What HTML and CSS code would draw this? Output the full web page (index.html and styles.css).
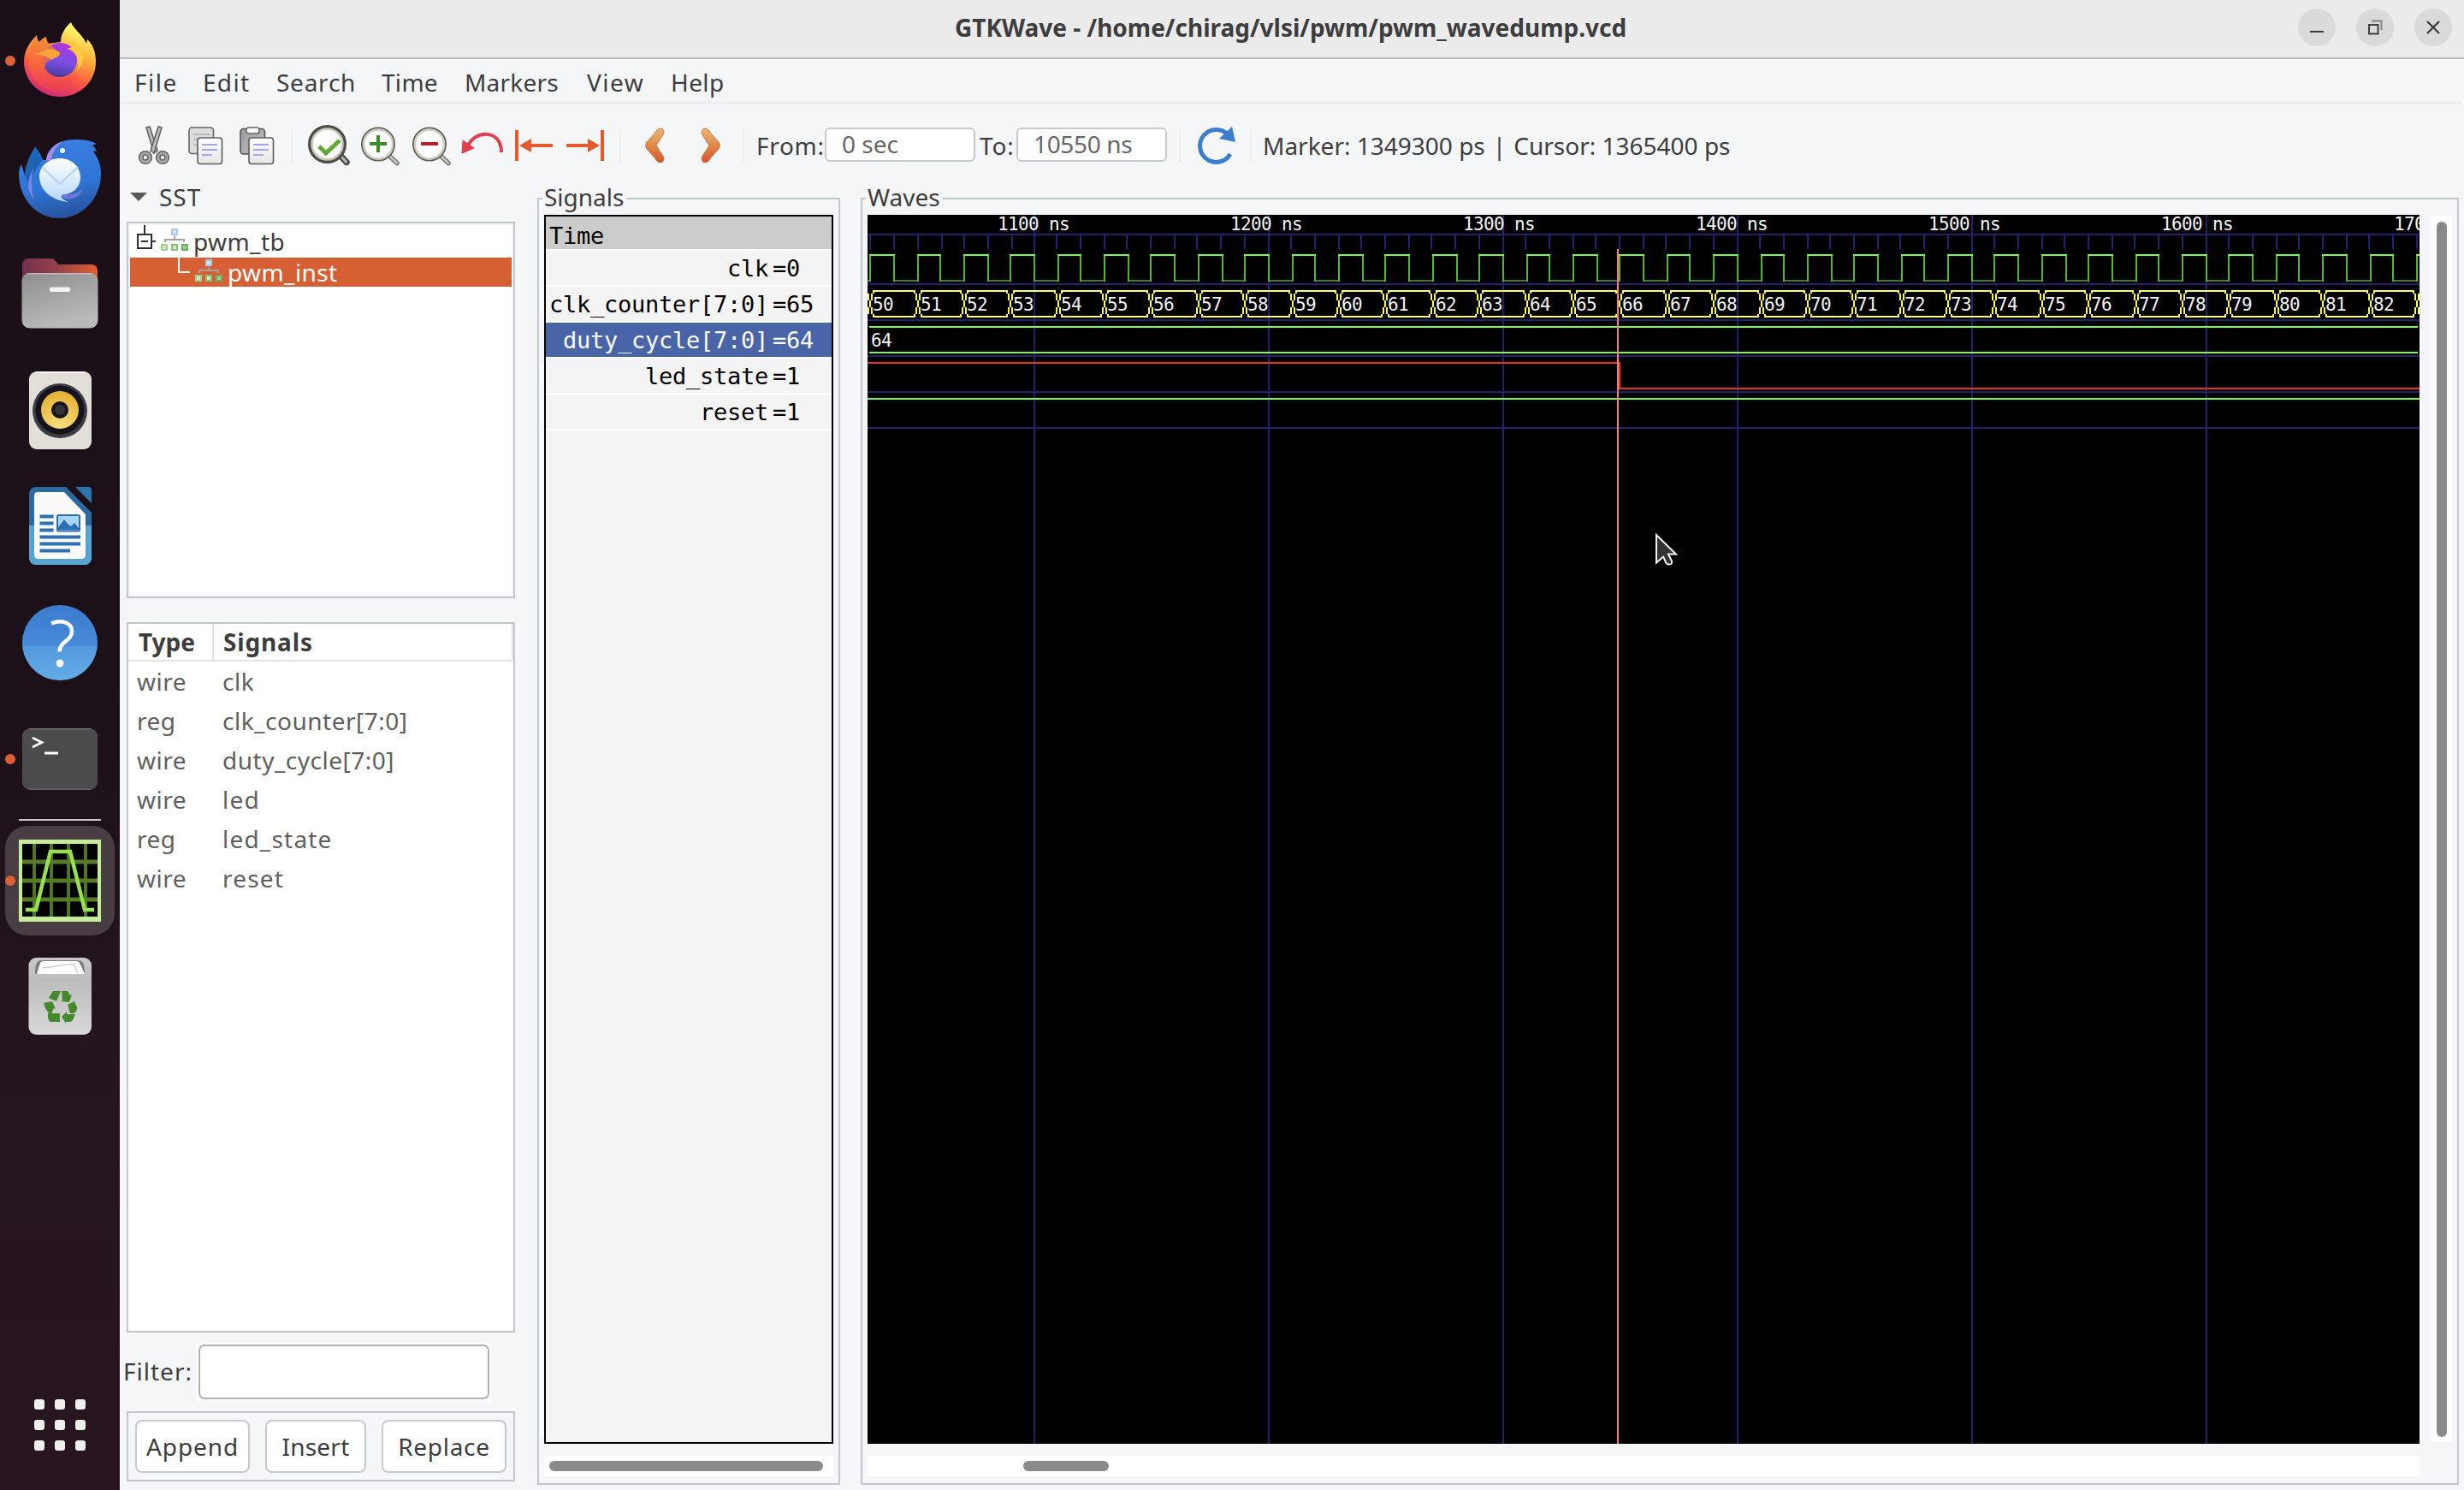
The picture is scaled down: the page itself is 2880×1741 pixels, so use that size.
FILE: index.html
```html
<!DOCTYPE html>
<html lang="en">
<head>
<meta charset="utf-8">
<title>GTKWave - /home/chirag/vlsi/pwm/pwm_wavedump.vcd</title>
<link rel="stylesheet" href="styles.css">
</head>
<body>
<nav class="dock">
  <div class="dock-item">
    <i class="running"></i>
    <svg viewBox="0 0 96 96" width="96" height="96">
      <defs>
        <linearGradient id="ffBody" x1="0.75" y1="0" x2="0.35" y2="1"><stop offset="0.1" stop-color="#fff36b"/><stop offset="0.38" stop-color="#fdb43a"/><stop offset="0.68" stop-color="#fb5a42"/><stop offset="1" stop-color="#d3277a"/></linearGradient>
        <linearGradient id="ffBall" x1="0.6" y1="0" x2="0.4" y2="1"><stop offset="0" stop-color="#b035dd"/><stop offset="0.55" stop-color="#7a4fe6"/><stop offset="1" stop-color="#4b3a95"/></linearGradient>
        <linearGradient id="ffFox" x1="0" y1="0" x2="0" y2="1"><stop offset="0" stop-color="#ef8236"/><stop offset="0.5" stop-color="#f86a3d"/><stop offset="1" stop-color="#ee3b52"/></linearGradient>
      </defs>
      <path d="M61 3c3 8 13 14 18 25l1-5c7 6 10 16 10 26 0 24-19 41-42 41S6 72 6 49c0-12 6-22 15-31 0 4 1 6 3 8 3-3 5-5 8-6 0 4 1 6 3 8l14-2C49 16 55 8 61 3z" fill="url(#ffBody)"/>
      <circle cx="48" cy="47" r="20" fill="url(#ffBall)"/>
      <path d="M21 18c0 4 1 6 3 8 3-3 5-5 8-6 0 6 4 9 9 13 3 3 7 4 7 6 0 4-5 5-9 7-12 4-11 19-1 25 10 5 24 3 29-9-1 16-15 25-31 21C20 79 9 60 12 40c1-9 5-16 9-22z" fill="url(#ffFox)" opacity="0.8"/>
      <path d="M18 40c6-2 12-2 15-6 5 0 14 2 15 5 0 4-5 5-10 8-5-5-13-6-20-7z" fill="#fba33a"/>
      <path d="M56 34c10 2 16 12 12 26 8-8 9-19 4-27-6-7-12-8-17-8 4 1 7 4 7 7z" fill="#fec840"/>
    </svg>
  </div>
  <div class="dock-item">
    <svg viewBox="0 0 96 96" width="96" height="96">
      <defs>
        <linearGradient id="tbBody" x1="0.4" y1="0" x2="0.6" y2="1"><stop offset="0" stop-color="#3b7fe0"/><stop offset="0.6" stop-color="#2f74d4"/><stop offset="1" stop-color="#265099"/></linearGradient>
        <linearGradient id="tbMail" x1="0" y1="0" x2="0" y2="1"><stop offset="0" stop-color="#ffffff"/><stop offset="1" stop-color="#b5d8fb"/></linearGradient>
      </defs>
      <path d="M32 28c1-13 13-24 34-24 9 0 18 1 25 5-2 1-4 1-5 2 3 2 4 4 5 7-2-1-3 0-4 0 6 8 9 16 9 26 0 28-21 52-49 52C20 96 0 72 0 44c0-4 1-8 3-11l4 13c1-12 6-24 12-33 4 4 7 9 9 15z" fill="url(#tbBody)"/>
      <path d="M19 13c-6 9-11 21-12 33l8 18c-3-14 3-24 13-36-2-6-5-11-9-15z" fill="#1f63b5"/>
      <path d="M32 28c1-9 8-18 19-22-8 7-12 13-13 23z" fill="#a78be8"/>
      <path d="M17 38c-8 14-8 26 1 36-4-13-4-24-1-36z" fill="#7d83e8"/>
      <circle cx="51" cy="17" r="3" fill="#e8f3ff"/>
      <path d="M46 66c14 5 22 2 29-5-3 10-14 15-24 11z" fill="#7077d8"/>
      <path d="M24 47c0-12 11-21 24-21s24 9 24 22c0 12-9 20-20 20-4 1-4 5 6 9-14-1-34-10-34-30z" fill="url(#tbMail)"/>
      <path d="M27 36l21 20 21-20" fill="none" stroke="#b5d3f3" stroke-width="2"/>
    </svg>
  </div>
  <div class="dock-item">
    <svg viewBox="0 0 96 96" width="96" height="96">
      <defs>
        <linearGradient id="flBack"><stop offset="0" stop-color="#74304f"/><stop offset="0.45" stop-color="#94404a"/><stop offset="1" stop-color="#e4602f"/></linearGradient>
        <linearGradient id="flFront" x1="0" y1="0" x2="0.4" y2="1"><stop offset="0" stop-color="#8e8e8e"/><stop offset="1" stop-color="#bababa"/></linearGradient>
      </defs>
      <path d="M4 14a7 7 0 0 1 7-7h27q3 0 5 3l3 4h39a7 7 0 0 1 7 7v30H4z" fill="url(#flBack)"/>
      <rect x="3.500" y="24" width="89" height="64.500" rx="9" fill="url(#flFront)"/>
      <path d="M10 24.800h76" stroke="#bdbdbd" stroke-width="1.600"/>
      <rect x="36" y="40.500" width="24" height="5.500" rx="2" fill="#f2f2f2"/>
    </svg>
  </div>
  <div class="dock-item">
    <svg viewBox="0 0 96 96" width="96" height="96">
      <defs><radialGradient id="rbCone" cx="0.5" cy="0.9" r="0.8"><stop offset="0" stop-color="#f8de7e"/><stop offset="1" stop-color="#e5b53a"/></radialGradient></defs>
      <rect x="12" y="3" width="73" height="91" rx="9" fill="#e2dfd8"/>
      <path d="M20 4h57" stroke="#f8f6f2" stroke-width="2"/>
      <circle cx="48" cy="49" r="32" fill="#3c3c42"/>
      <circle cx="48" cy="48" r="28.500" fill="#15131b"/>
      <circle cx="48" cy="48" r="22" fill="url(#rbCone)"/>
      <circle cx="48" cy="48" r="10" fill="#17151a"/>
      <circle cx="48" cy="48" r="6" fill="#343438"/>
    </svg>
  </div>
  <div class="dock-item">
    <svg viewBox="0 0 96 96" width="96" height="96">
      <path d="M20 2h35l30 30v53a8 8 0 0 1-8 8H20a8 8 0 0 1-8-8V10a8 8 0 0 1 8-8z" fill="#2a6a9f"/>
      <path d="M12 47h73v38a8 8 0 0 1-8 8H20a8 8 0 0 1-8-8z" fill="#58a3cf"/>
      <path d="M22 8h31l25 26v47q0 5-5 5H23q-5 0-5-5V12q0-4 4-4z" fill="#fafafa"/>
      <path d="M66 2h15q4 0 4 4v15z" fill="#2c74ae"/>
      <path d="M24.500 36.500h16M24.500 44.500h16M24.500 52.500h16M24.500 60.500h47.500M24.500 68.500h47.500M24.500 76.500h35.500" stroke="#2d6fb3" stroke-width="4"/>
      <rect x="45" y="35" width="26" height="18.500" rx="1.500" fill="#a9d5f3" stroke="#2d6fb3" stroke-width="2"/>
      <path d="M46 52v-3l7-9 5 6 3 2 4-4 5 6v2z" fill="#2d6fb3"/>
    </svg>
  </div>
  <div class="dock-item">
    <svg viewBox="0 0 96 96" width="96" height="96">
      <defs><linearGradient id="hpTop" x1="0" y1="0" x2="0" y2="1"><stop offset="0" stop-color="#3a7bcd"/><stop offset="0.54" stop-color="#478bd8"/><stop offset="0.55" stop-color="#5199dd"/><stop offset="1" stop-color="#64ace6"/></linearGradient></defs>
      <circle cx="48" cy="48" r="44" fill="url(#hpTop)"/>
      <path d="M38 25.500c12-5 24-1 24 9 0 12-14 11-14.500 24" fill="none" stroke="#fff" stroke-width="4.500"/>
      <circle cx="48" cy="72" r="4.500" fill="#fff"/>
    </svg>
  </div>
  <div class="dock-item">
    <i class="running"></i>
    <svg viewBox="0 0 96 96" width="96" height="96">
      <rect x="4" y="12" width="88" height="72" rx="9" fill="#4b4b4b"/>
      <path d="M12 12.800h72" stroke="#757575" stroke-width="1.600"/>
      <path d="M12 83.200h72" stroke="#636363" stroke-width="1.600"/>
      <path d="M16 23l11 5.500-11 5.500" fill="none" stroke="#fff" stroke-width="2.600"/>
      <path d="M30 41h16" stroke="#fff" stroke-width="3"/>
    </svg>
  </div>
  <hr class="dock-line">
  <div class="dock-item active">
    <i class="running"></i>
    <svg viewBox="0 0 96 96" width="96" height="96">
      <rect width="96" height="96" fill="#c5ec98"/>
      <rect x="4" y="5" width="88" height="85" fill="#000"/>
      <path d="M18 5v85M38 5v85M58 5v85M78 5v85" stroke="#507528" stroke-width="4"/>
      <path d="M4 26h88M4 48h88M4 70h88" stroke="#557a2a" stroke-width="5"/>
      <path d="M8 82h12l17-68h23l17 68h11" fill="none" stroke="#97e050" stroke-width="4.500"/>
    </svg>
  </div>
  <div class="dock-item trash">
    <svg viewBox="0 0 96 96" width="96" height="96">
      <defs><linearGradient id="trBody" x1="0" y1="0" x2="0" y2="1"><stop offset="0" stop-color="#c9c9c9"/><stop offset="0.3" stop-color="#bdbdbd"/><stop offset="1" stop-color="#d8d8d8"/></linearGradient></defs>
      <rect x="11.500" y="3" width="73.500" height="90" rx="9" fill="url(#trBody)"/>
      <path d="M19 22c0-12 2-16 8-16h42c6 0 8 4 8 16z" fill="#7c7c7c"/>
      <path d="M21 22l4-13q1-2 4-2h38q3 0 4 2l6 13z" fill="#fff"/>
      <path d="M28 15l36-5 5 11" fill="none" stroke="#d0d0d0" stroke-width="1.500"/>
      <g fill="#45892f">
        <path d="M40 42h9l-5 12-9-4zM50 42h7l3 5 2-1-3 9-10-1 2-1z"/>
        <path d="M29 56l10-2 4 9-2-1-4 9-6-9zM34 68h14v10H38q-3 0-4-5z"/>
        <path d="M57 58l8-4 3 7q1 2-1 5l-3 2h-4zM50 72l6-6v3h10l-3 7q-1 2-4 2h-4v2z"/>
      </g>
    </svg>
  </div>
  <div class="apps"><i></i><i></i><i></i><i></i><i></i><i></i><i></i><i></i><i></i></div>
</nav>

<div class="window">
  <header class="titlebar">
    <h1>GTKWave - /home/chirag/vlsi/pwm/pwm_wavedump.vcd</h1>
    <div class="controls">
      <svg viewBox="0 0 44 44" width="44" height="44"><circle cx="22" cy="22" r="22"/><path d="M14 27h16" stroke-width="2"/></svg>
      <svg viewBox="0 0 44 44" width="44" height="44"><circle cx="22" cy="22" r="22"/><path d="M18 14.500h11.500V25" stroke-width="2" opacity="0.550"/><path d="M15 19h10.500v10.500H15z" stroke-width="2"/></svg>
      <svg viewBox="0 0 44 44" width="44" height="44"><circle cx="22" cy="22" r="22"/><path d="M15 15l14 14M29 15L15 29" stroke-width="2.400"/></svg>
    </div>
  </header>
  <nav class="menubar">
    <span class="m-file">File</span><span class="m-edit">Edit</span><span class="m-search">Search</span><span class="m-time">Time</span><span class="m-markers">Markers</span><span class="m-view">View</span><span class="m-help">Help</span>
  </nav>
  <div class="toolbar">
    <svg class="tools" viewBox="160 140 260 56" width="260" height="56">
      <defs>
        <linearGradient id="paper" x1="0" y1="0" x2="0" y2="1"><stop offset="0" stop-color="#fdfdfd"/><stop offset="1" stop-color="#e6e6e6"/></linearGradient>
        <linearGradient id="board" x1="0" y1="0" x2="1" y2="1"><stop offset="0" stop-color="#999"/><stop offset="1" stop-color="#c4c4c4"/></linearGradient>
      </defs>
      <g stroke="#5f5f5f" stroke-width="1.500" fill="#bcbcbc">
        <path d="M171 148l4-1 9 28-4 3z"/><path d="M189 148l-4-1-9 28 4 3z"/>
        <circle cx="170" cy="183" r="7.300" fill="#aaa"/><circle cx="190" cy="183" r="7.300" fill="#aaa"/>
        <circle cx="170" cy="183" r="3" fill="#f0f0f0"/><circle cx="190" cy="183" r="3" fill="#f0f0f0"/>
      </g>
      <rect x="221" y="148" width="28.500" height="30.500" rx="3.500" fill="#ddd" stroke="#666" stroke-width="1.600"/>
      <path d="M226 156h19M226 162h10M226 168h7" stroke="#b0b0b0" stroke-width="1.600"/>
      <rect x="231" y="160" width="28.500" height="30.500" rx="3" fill="url(#paper)" stroke="#5c5c5c" stroke-width="1.600"/>
      <path d="M236 168h18M236 174h18M236 180h12" stroke="#a5a5ea" stroke-width="2"/>
      <rect x="281" y="149.500" width="28.500" height="29.500" rx="3.500" fill="url(#board)" stroke="#555" stroke-width="1.600"/>
      <rect x="288" y="148" width="15" height="7" rx="3" fill="#fff" stroke="#666" stroke-width="1.500"/>
      <rect x="291" y="160" width="28.500" height="30.500" rx="3" fill="url(#paper)" stroke="#5c5c5c" stroke-width="1.600"/>
      <path d="M296 168h18M296 174h18M296 180h12" stroke="#a5a5ea" stroke-width="2"/>
      <path d="M341 151v38" stroke="#e9ebed" stroke-width="1.600"/>
      <path d="M398 181l7 7.500" stroke="#4c4c48" stroke-width="7.500" stroke-linecap="round"/><path d="M398 181l6.500 7" stroke="#b5b4a6" stroke-width="3.200" stroke-linecap="round"/>
      <circle cx="382.500" cy="167.500" r="20" fill="#fff" stroke="#4c4c4a" stroke-width="5"/><circle cx="382.500" cy="167.500" r="18" fill="none" stroke="#cac7b8" stroke-width="2.600"/>
      <path d="M373 170l8 8 16-15" fill="none" stroke="#62a93c" stroke-width="5"/>
    </svg>
    <svg class="tools" viewBox="420 140 450 56" width="450" height="56">
      <defs><linearGradient id="chev" x1="0" y1="0" x2="0" y2="1"><stop offset="0" stop-color="#e9b878"/><stop offset="0.500" stop-color="#e08a48"/><stop offset="1" stop-color="#d4552a"/></linearGradient></defs>
      <g id="lens"><path d="M456 182l8 7.500" stroke="#77766e" stroke-width="5.500" stroke-linecap="round"/><path d="M456 182l8 7.500" stroke="#c9c7bc" stroke-width="2.500" stroke-linecap="round"/>
      <circle cx="442" cy="167.500" r="19" fill="#fff" stroke="#5f5f5b" stroke-width="2"/><circle cx="442" cy="167.500" r="17" fill="none" stroke="#cfccbf" stroke-width="2.500"/></g>
      <path d="M442 157v20M432 167h20" stroke="#3c8a2c" stroke-width="4"/>
      <use href="#lens" x="60"/>
      <path d="M492 167h20" stroke="#b2242e" stroke-width="4"/>
      <path d="M547 170c6-18 39-22 39 7" fill="none" stroke="#e23e4c" stroke-width="4"/><path d="M541 163l-1 15 14-6z" fill="#e23e4c" stroke="#e23e4c"/>
      <g fill="#e55a2b"><path d="M602 151h4v36h-4zM607 169l14-8v6h25v4h-25v6zM701 169l-14-8v6h-25v4h25v6zM702 151h4v36h-4z"/></g>
      <path d="M725 151v38M869 151v38" stroke="#e9ebed" stroke-width="1.600"/>
      <path id="cv" d="M772 149q4 0 4 6l-9 14 9 14q0 6-4 6t-7-6l-9-10q-3-4 0-8l9-10q3-6 7-6z" fill="url(#chev)" stroke="#c86a35" stroke-width="0.800"/>
      <use href="#cv" transform="translate(1596 0) scale(-1 1)"/>
    </svg>
    <span class="lbl from">From:</span><span class="entry e1">0 sec</span>
    <span class="lbl to">To:</span><span class="entry e2">10550 ns</span>
    <svg class="reload" viewBox="1374 140 96 56" width="96" height="56">
      <path d="M1379 151v38M1462 151v38" stroke="#e9ebed" stroke-width="1.600"/>
      <path d="M1438 179a19 19 0 1 1-3-23" fill="none" stroke="#3b7fcc" stroke-width="5"/>
      <path d="M1440 147l4 18-19-4z" fill="#3b7fcc"/>
    </svg>
    <span class="lbl status"><span>Marker: 1349300 ps</span><span>|</span><span>Cursor: 1365400 ps</span></span>
  </div>

  <main class="main">
    <section class="left">
      <div class="sst"><i class="tri"></i><span>SST</span></div>
      <div class="tree">
        <div class="node">
          <svg viewBox="152 263 72 38" width="72" height="38">
            <path d="M169 263v10M161 274h16v16h-16zM165 282h8M178 282h4" fill="none" stroke="#2e3436" stroke-width="2"/>
            <g id="mod"><rect x="200" y="267" width="8" height="8" fill="#a9c6ec"/><rect x="202" y="269" width="4" height="4" fill="#d5e4f8"/>
            <path d="M204 276v4M193 283v-3h22v3" fill="none" stroke="#a2a2a2" stroke-width="1.800"/>
            <path d="M188 285h8v8h-8z" fill="#9fd08f"/><path d="M200 285h8v8h-8z" fill="#86c077"/><path d="M212 285h8v8h-8z" fill="#6fae60"/>
            <path d="M190 287h4v4h-4zM202 287h4v4h-4z" fill="#cfeac8"/><path d="M214 287h4v4h-4z" fill="#9ccb90"/></g>
          </svg><span>pwm_tb</span>
        </div>
        <div class="node selected">
          <svg viewBox="152 301 112 34" width="112" height="34">
            <path d="M209 301v17h13" fill="none" stroke="#fff" stroke-width="2"/>
            <use href="#mod" x="40" y="36"/>
          </svg><span>pwm_inst</span>
        </div>
      </div>
      <div class="list">
        <div class="lrow head"><b>Type</b><b>Signals</b></div>
        <div class="lrow"><span>wire</span><span>clk</span></div>
        <div class="lrow"><span>reg</span><span>clk_counter[7:0]</span></div>
        <div class="lrow"><span>wire</span><span>duty_cycle[7:0]</span></div>
        <div class="lrow"><span>wire</span><span class="wide">led</span></div>
        <div class="lrow"><span>reg</span><span class="wide">led_state</span></div>
        <div class="lrow"><span>wire</span><span class="wide">reset</span></div>
      </div>
      <div class="filter"><span>Filter:</span><div class="halo"><div class="field"></div></div></div>
      <div class="actions"><button class="b1">Append</button><button class="b2">Insert</button><button class="b3">Replace</button></div>
    </section>

    <section class="frame signals">
      <span class="frame-label">Signals</span>
      <div class="siglist">
        <div class="srow time">Time</div>
        <div class="srow"><span>clk</span><span>=0</span></div>
        <div class="srow"><span>clk_counter[7:0]</span><span>=65</span></div>
        <div class="srow sel"><span>duty_cycle[7:0]</span><span>=64</span></div>
        <div class="srow"><span>led_state</span><span>=1</span></div>
        <div class="srow"><span>reset</span><span>=1</span></div>
      </div>
      <div class="track"><i class="thumb"></i></div>
    </section>

    <section class="frame waves">
      <span class="frame-label">Waves</span>
      <div class="wave-col">
        <svg id="wave" viewBox="0 0 1814 1436" width="1814" height="1436"></svg>
        <div class="track"><i class="thumb"></i></div>
      </div>
      <div class="vtrack"><i></i></div>
    </section>
  </main>
</div>

<svg class="pointer" viewBox="0 0 30 42" width="30" height="42">
  <path d="M2 3l23 22.500h-9l4 8q1 4-3 4t-5-5l-2-4-8 7z" fill="#333" stroke="#f2f2f2" stroke-width="2"/>
</svg>
<script src="wave.js"></script>
</body>
</html>
```
FILE: styles.css
```css
* { box-sizing: border-box; }
body { margin: 0; width: 2880px; height: 1741px; display: flex; overflow: hidden; position: relative; background: #f5f6f8; font-family: "Noto Sans", "Open Sans", sans-serif; font-size: 28px; color: #3d3d3d; white-space: nowrap; }
svg { display: block; flex: none; }

.dock { width: 140px; height: 1741px; flex: none; display: flex; flex-direction: column; align-items: center; padding-top: 3px; background: linear-gradient(180deg, #1a0f16 0%, #1c1119 45%, #25161f 75%, #28151f 100%); }
.dock-item { width: 140px; height: 136px; flex: none; display: flex; align-items: center; justify-content: center; position: relative; }
.running { position: absolute; left: 6px; top: 62px; width: 12px; height: 12px; border-radius: 50%; background: #dc6036; z-index: 1; }
.dock-line { width: 96px; height: 2px; margin: 2px 0 6px; border: 0; background: #c9c5c8; flex: none; }
.active { width: 128px; height: 128px; border-radius: 26px; background: #473d43; }
.active .running { left: 0; top: 58px; }
.trash { margin-top: 3px; }
.apps { margin-top: 403px; display: grid; grid-template-columns: repeat(3, 12px); gap: 12px; }
.apps i { width: 12px; height: 12px; border-radius: 3px; background: #efefec; }

.window { flex: 1; display: flex; flex-direction: column; }
.titlebar { height: 69px; flex: none; display: flex; align-items: center; background: #ebebeb; border-bottom: 2px solid #bdbdbd; padding: 0 14px 4px 976px; }
.titlebar h1 { margin: 0; flex: 1; font-size: 28px; font-weight: 700; line-height: 60px; }
.controls { display: flex; gap: 24px; }
.controls circle { fill: #dadada; }
.controls path { fill: none; stroke: #3d3d3d; }
.menubar { height: 52px; flex: none; display: flex; margin: 0 2px; padding: 2px 0 0 15px; line-height: 50px; border-bottom: 2px solid #ededef; }
.menubar span { flex: none; }
.m-file { width: 80px; letter-spacing: 1.5px; }
.m-edit { width: 86px; letter-spacing: 1.3px; }
.m-search { width: 123px; letter-spacing: 0.75px; }
.m-time { width: 97px; letter-spacing: 0.3px; }
.m-markers { width: 143px; letter-spacing: 0.2px; }
.m-view { width: 98px; letter-spacing: 1.5px; }
.m-help { letter-spacing: 0.4px; }
.toolbar { height: 96px; flex: none; display: flex; align-items: center; padding-left: 20px; }
.lbl { line-height: 40px; padding-top: 1px; }
.from { width: 80px; margin-left: 14px; letter-spacing: 0.7px; }
.to { width: 43px; margin-left: 5px; letter-spacing: 0.9px; }
.entry { width: 176px; height: 40px; line-height: 35px; padding-left: 18px; border: 2px solid #c6cacd; border-radius: 6px; background: #fff; color: #666; }
.e2 { letter-spacing: -0.35px; }
.reload { margin-left: 10px; }
.status { margin-left: 6px; display: flex; gap: 9px; }

.main { flex: 1; display: flex; align-items: flex-start; }
.left { width: 462px; display: flex; flex-direction: column; padding-left: 8px; }
.sst { height: 42px; display: flex; gap: 14px; padding-left: 4px; line-height: 26px; letter-spacing: 1px; }
.tri { width: 20px; height: 10px; margin-top: 8px; background: #5a5a5a; clip-path: polygon(0 0, 100% 0, 50% 100%); }
.tree { height: 440px; border: 2px solid #c1c7cc; padding: 2px; background: #fff; background-clip: content-box; letter-spacing: 0.4px; }
.node { display: flex; height: 38px; line-height: 38px; }
.node span { padding-left: 2px; }
.selected { height: 34px; line-height: 34px; background: #d75f34; color: #fff; }
.list { margin-top: 28px; height: 830px; border: 2px solid #c1c7cc; background: #fff; color: #606060; letter-spacing: 0.5px; }
.lrow { display: grid; grid-template-columns: 100px 1fr; height: 46px; line-height: 46px; }
.lrow > * { padding-left: 10px; }
.lrow .wide { letter-spacing: 1.2px; }
.head { height: 44px; line-height: 42px; color: #3d3d3d; border-bottom: 2px solid #e4e4e4; }
.head b { border-right: 2px solid #e4e4e4; padding-left: 12px; height: 42px; letter-spacing: 0; }
.head b + b { padding-left: 11px; letter-spacing: 0.85px; }
.filter { margin: 12px 0 0 -4px; height: 68px; display: flex; line-height: 66px; letter-spacing: 1px; }
.filter > span { width: 86px; }
.halo { width: 344px; height: 68px; padding: 2px; background: #fff; }
.field { height: 64px; border: 2px solid #b3b3ae; border-radius: 7px; background: #fff; }
.actions { margin-top: 12px; height: 82px; border: 2px solid #c1c7cc; display: flex; gap: 18px; padding: 8px; }
.actions button { height: 62px; padding: 0; border: 2px solid #c6cacd; border-radius: 8px; background: #fff; font: inherit; color: #3d3d3d; }
.actions .b1 { width: 134px; letter-spacing: 0.9px; }
.actions .b2 { width: 118px; letter-spacing: 0.2px; }
.actions .b3 { width: 146px; letter-spacing: 0.7px; }

.frame { position: relative; height: 1504px; margin-top: 14px; border: 2px solid #c1c7cc; padding: 18px 6px 0; }
.frame-label { position: absolute; left: 4px; top: -21px; padding: 0 3px 0 2px; line-height: 36px; background: #f5f6f8; }
.signals { width: 354px; margin-left: 26px; }
.waves { width: 1868px; margin-left: 24px; display: flex; gap: 14px; }
.siglist { height: 1436px; border: 2px solid #000; background: #f4f4f4; font-family: "DejaVu Sans Mono", monospace; font-size: 27px; letter-spacing: -0.25px; color: #000; }
.srow { height: 42px; line-height: 41px; display: grid; grid-template-columns: 260px 1fr; gap: 5px; border-bottom: 2px solid #fff; }
.srow span:first-child { text-align: right; }
.time { display: block; height: 40px; line-height: 45px; padding-left: 4px; background: #ccc; }
.sel { background: #4a64a8; color: #fff; }
.track { height: 24px; margin-top: 14px; padding: 6px; background: #fff; }
.thumb { display: block; width: 320px; height: 12px; border-radius: 6px; background: #8a8a8a; }
.waves .thumb { width: 100px; margin-left: 176px; }
.wave-col { width: 1814px; }
#wave { background: #000; font-family: "DejaVu Sans Mono", monospace; font-size: 21px; letter-spacing: -0.64px; }
#wave text { fill: #f2f2f2; }
.vtrack { width: 24px; height: 1432px; margin-top: 2px; padding: 6px; background: #fff; }
.vtrack i { display: block; width: 12px; height: 1420px; border-radius: 6px; background: #8a8a8a; }
.pointer { position: absolute; left: 1934px; top: 622px; }
```
FILE: wave.js
```js
// Trace renderer: one logical pixel is two device pixels, 100 ns span 137 logical pixels.
const svg = document.getElementById('wave');
const parts = [];
const path = (d, c) => parts.push(`<path d="${d}" stroke="${c}" stroke-width="2" fill="none"/>`);
const line = (x1, y1, x2, y2, c) => path(`M${x1} ${y1}L${x2} ${y2}`, c);
const text = (x, y, s) => parts.push(`<text x="${x}" y="${y}">${s}</text>`);
const W = 1814, H = 1436, ORIGIN = 1017;
const NAVY = '#22216e', GREEN = '#75fb4c', YELLOW = '#fffe54', RED = '#eb3323';
const tickX = t => ORIGIN + 2 * Math.floor((t - 1400) * 1.37 + (t < 1100 ? 0.9 : 1e-6));
const edgeX = t => ORIGIN + 2 * Math.round((t - 1400) * 1.3694 - 0.16);

// row separators and time grid
[23, 81, 123, 165, 207, 249].forEach(y => line(0, y, W, y, NAVY));
for (let t = 1030; t <= 1700; t += 10) {
  const x = tickX(t);
  if (t % 100 === 0) line(x, 0, x, H, NAVY);
  else line(x, 24, x, 40, NAVY);
}

// clk
for (let t = 1010; t < 1710; t += 20) {
  const a = edgeX(t), b = edgeX(t + 10), c = edgeX(t + 20);
  line(b - 1, 77, c + 1, 77, '#367f22');
  line(a, 46, a, 78, '#53b436');
  line(b, 46, b, 78, '#53b436');
  line(a - 1, 47, b + 1, 47, GREEN);
}

// clk_counter[7:0]
for (let t = 1010, n = 49; t < 1710; t += 20, n++) {
  const a = edgeX(t), b = edgeX(t + 20);
  path(`M${a + 3} 89H${b - 3}M${a + 3} 119H${b - 3}`, YELLOW);
  path(`M${a + 4} 90v2M${a + 4} 116v2M${b - 4} 90v2M${b - 4} 116v2M${a + 2} 92v8M${b - 2} 92v8M${a + 2} 108v8M${b - 2} 108v8M${b} 100v8`, YELLOW);
  if (n >= 50 && n <= 82) text(a + 3, 112, n);
}

// duty_cycle[7:0]
line(2, 131, 1812, 131, GREEN);
line(2, 161, 1812, 161, GREEN);
text(4, 154, '64');

// led_state
path(`M0 173H${edgeX(1350)}V203H${W}`, RED);

// reset
line(0, 215, W, 215, GREEN);

for (let i = 0; i < 7; i++) text(152 + 272 * i, 18, `${1100 + 100 * i} ns`);

// marker
line(877, 40, 877, H, '#f08080');
svg.innerHTML = parts.join('');
```
